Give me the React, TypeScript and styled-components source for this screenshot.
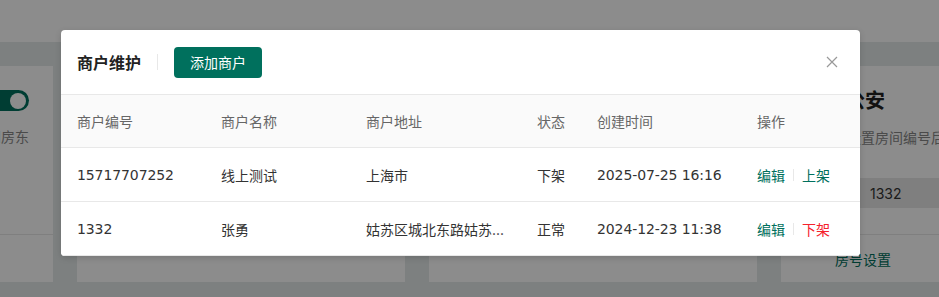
import styled, { createGlobalStyle } from "styled-components";

const GlobalStyle = createGlobalStyle`
  html, body {
    margin: 0;
    padding: 0;
    width: 939px;
    height: 297px;
    overflow: hidden;
    background: #e4e9e9;
    font-family: "Inter", "Noto Sans CJK SC", sans-serif;
  }
  * { box-sizing: border-box; }
`;

const Page = styled.div`
  width: 939px;
  height: 297px;
  position: relative;
  overflow: hidden;
`;

const TopBar = styled.div`
  height: 42px;
  background: #fff;
`;

const CardRow = styled.div`
  display: flex;
  gap: 24px;
  margin-left: -275px;
  padding-top: 24px;
`;

const Card = styled.div`
  width: 328px;
  height: 216px;
  flex-shrink: 0;
  background: #fff;
  display: flex;
  flex-direction: column;
`;

const CardBody = styled.div`
  flex: 1;
  padding: 24px 24px 0;
  display: flex;
  flex-direction: column;
`;

const CardTitle = styled.div`
  font-size: 20px;
  font-weight: 700;
  color: #222;
  line-height: 22px;
  white-space: nowrap;
`;

const CardSub = styled.div<{ $right?: boolean }>`
  font-size: 14px;
  color: #888;
  margin-top: 16px;
  line-height: 20px;
  white-space: nowrap;
  text-align: ${(p) => (p.$right ? "right" : "left")};
`;

const Switch = styled.div`
  width: 44px;
  height: 21px;
  border-radius: 11px;
  background: #00705d;
  margin-left: auto;
  display: flex;
  align-items: center;
  justify-content: flex-end;
  padding-right: 3px;
  &::after {
    content: "";
    width: 16px;
    height: 16px;
    border-radius: 50%;
    background: #fff;
  }
`;

const FakeInput = styled.div`
  margin-top: 30px;
  height: 30px;
  background: #e8e8e8;
  padding-left: 65px;
  display: flex;
  align-items: center;
  font-size: 14px;
  color: #333;
`;

const CardFoot = styled.div`
  height: 48px;
  border-top: 1px solid #e8e8e8;
  display: flex;
`;

const FootAction = styled.div`
  flex: 1;
  display: flex;
  align-items: center;
  justify-content: center;
  font-size: 14px;
  color: #00705d;
`;

const Mask = styled.div`
  position: absolute;
  inset: 0;
  background: rgba(0, 0, 0, 0.45);
`;

const Modal = styled.div`
  position: absolute;
  left: 61px;
  top: 30px;
  width: 799px;
  background: #fff;
  border-radius: 4px;
  box-shadow: 0 2px 6px rgba(0, 0, 0, 0.15);
  overflow: hidden;
`;

const ModalHeader = styled.div`
  height: 64px;
  padding: 0 22px 0 16px;
  display: flex;
  align-items: center;
`;

const ModalTitle = styled.div`
  font-size: 16px;
  font-weight: 700;
  color: #222;
`;

const Divider = styled.div`
  width: 1px;
  height: 16px;
  background: #e8e8e8;
  margin: 0 16px;
`;

const AddButton = styled.button`
  height: 31px;
  padding: 0 16px;
  border: none;
  border-radius: 4px;
  background: #00705d;
  color: #fff;
  font-family: inherit;
  font-size: 14px;
`;

const Close = styled.div`
  margin-left: auto;
  width: 12px;
  height: 12px;
  display: flex;
`;

const Row = styled.div<{ $head?: boolean }>`
  display: grid;
  grid-template-columns: 144px 145px 171px 60px 160px 1fr;
  height: 54px;
  align-items: center;
  background: ${(p) => (p.$head ? "#fafafa" : "#fff")};
  border-top: ${(p) => (p.$head ? "1px solid #e8e8e8" : "none")};
  border-bottom: 1px solid #e8e8e8;
  font-size: 14px;
  color: ${(p) => (p.$head ? "#666" : "#333")};
`;

const Cell = styled.div`
  padding-left: 16px;
  white-space: nowrap;
  overflow: hidden;
`;

const NumCell = styled(Cell)`
  font-family: "DejaVu Sans", "Noto Sans CJK SC", sans-serif;
  font-size: 14px;
  letter-spacing: -0.1px;
`;

const Actions = styled.div`
  padding-left: 16px;
  display: flex;
  align-items: center;
  gap: 8px;
`;

const Link = styled.span<{ $danger?: boolean }>`
  color: ${(p) => (p.$danger ? "#f5222d" : "#00705d")};
  cursor: pointer;
`;

const Sep = styled.span`
  width: 1px;
  height: 12px;
  background: #e8e8e8;
`;

const rows = [
  { id: "15717707252", name: "线上测试", addr: "上海市", status: "下架", time: "2025-07-25 16:16", online: false },
  { id: "1332", name: "张勇", addr: "姑苏区城北东路姑苏...", status: "正常", time: "2024-12-23 11:38", online: true },
];

export default function App() {
  return (
    <Page>
      <GlobalStyle />
      <TopBar />
      <CardRow>
        <Card>
          <CardBody>
            <Switch />
            <CardSub $right>开启后消息将同步通知房东</CardSub>
          </CardBody>
          <CardFoot>
            <FootAction>查看详情</FootAction>
          </CardFoot>
        </Card>
        <Card />
        <Card />
        <Card>
          <CardBody>
            <CardTitle>苏州公安</CardTitle>
            <CardSub>请点击设置房间编号后使用</CardSub>
            <FakeInput>1332</FakeInput>
          </CardBody>
          <CardFoot>
            <FootAction>房号设置</FootAction>
            <FootAction>查看</FootAction>
          </CardFoot>
        </Card>
      </CardRow>
      <Mask />
      <Modal>
        <ModalHeader>
          <ModalTitle>商户维护</ModalTitle>
          <Divider />
          <AddButton>添加商户</AddButton>
          <Close>
            <svg width="12" height="12" viewBox="0 0 12 12">
              <path d="M1 1L11 11M11 1L1 11" stroke="#999" strokeWidth="1.2" fill="none" />
            </svg>
          </Close>
        </ModalHeader>
        <Row $head>
          <Cell>商户编号</Cell>
          <Cell>商户名称</Cell>
          <Cell>商户地址</Cell>
          <Cell>状态</Cell>
          <Cell>创建时间</Cell>
          <Cell>操作</Cell>
        </Row>
        {rows.map((r) => (
          <Row key={r.id}>
            <NumCell>{r.id}</NumCell>
            <Cell>{r.name}</Cell>
            <Cell>{r.addr}</Cell>
            <Cell>{r.status}</Cell>
            <NumCell>{r.time}</NumCell>
            <Actions>
              <Link>编辑</Link>
              <Sep />
              <Link $danger={r.online}>{r.online ? "下架" : "上架"}</Link>
            </Actions>
          </Row>
        ))}
      </Modal>
    </Page>
  );
}
